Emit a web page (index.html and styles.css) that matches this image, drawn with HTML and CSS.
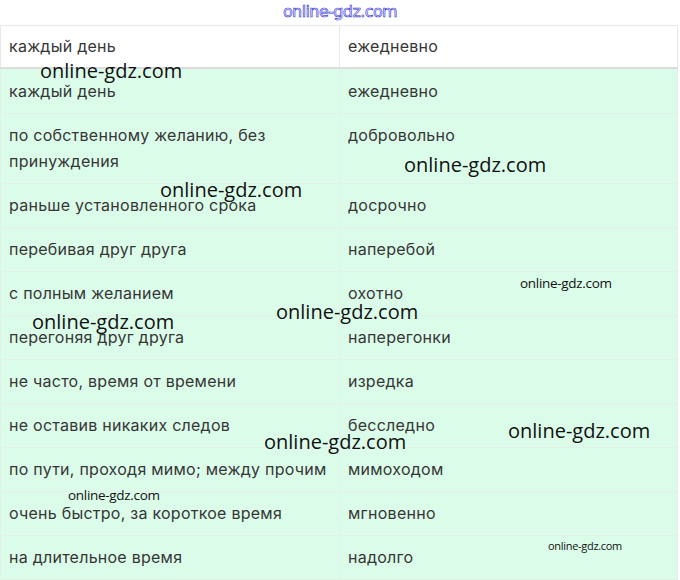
FILE: index.html
```html
<!DOCTYPE html>
<html lang="ru">
<head>
<meta charset="utf-8">
<link rel="stylesheet" href="styles.css">
</head>
<body>
<div class="page">
  <div class="site">online-gdz.com</div>
  <table class="words">
    <thead>
      <tr><th>каждый день</th><th>ежедневно</th></tr>
    </thead>
    <tbody>
      <tr class="first"><td>каждый день</td><td>ежедневно</td></tr>
      <tr><td>по собственному желанию, без принуждения</td><td>добровольно</td></tr>
      <tr><td>раньше установленного срока</td><td>досрочно</td></tr>
      <tr><td>перебивая друг друга</td><td>наперебой</td></tr>
      <tr><td>с полным желанием</td><td>охотно</td></tr>
      <tr><td>перегоняя друг друга</td><td>наперегонки</td></tr>
      <tr><td>не часто, время от времени</td><td>изредка</td></tr>
      <tr><td>не оставив никаких следов</td><td>бесследно</td></tr>
      <tr><td>по пути, проходя мимо; между прочим</td><td>мимоходом</td></tr>
      <tr><td>очень быстро, за короткое время</td><td>мгновенно</td></tr>
      <tr><td>на длительное время</td><td>надолго</td></tr>
    </tbody>
  </table>
  <span class="wm big" style="left:40px;top:61px">online-gdz.com</span>
  <span class="wm big" style="left:404px;top:155px">online-gdz.com</span>
  <span class="wm big" style="left:160px;top:180px">online-gdz.com</span>
  <span class="wm small" style="left:520px;top:277px">online-gdz.com</span>
  <span class="wm big" style="left:276px;top:302px">online-gdz.com</span>
  <span class="wm big" style="left:32px;top:312px">online-gdz.com</span>
  <span class="wm big" style="left:264px;top:432px">online-gdz.com</span>
  <span class="wm big" style="left:508px;top:421px">online-gdz.com</span>
  <span class="wm small" style="left:68px;top:489px">online-gdz.com</span>
  <span class="wm tiny" style="left:548px;top:540px">online-gdz.com</span>
</div>
</body>
</html>
```

FILE: styles.css
```css
html, body {
  margin: 0;
  padding: 0;
  background: #ffffff;
}
.page {
  position: relative;
  width: 680px;
  height: 580px;
  overflow: hidden;
}
.site {
  height: 25px;
  text-align: center;
  font-family: "DejaVu Sans", "Liberation Sans", sans-serif;
  font-size: 16px;
  line-height: 24px;
  color: #f4f4ff;
  -webkit-text-stroke: 0.6px #2f2fd6;
  letter-spacing: -0.6px;
}
.words {
  width: 678px;
  margin-left: 0;
  border-collapse: collapse;
  font-family: Inter, "Noto Sans", sans-serif;
  font-size: 16px;
  letter-spacing: 0.25px;
  color: #363636;
  table-layout: fixed;
}
.words th, .words td {
  text-align: left;
  font-weight: 400;
  padding: 8px 8px 9px 8px;
  line-height: 26px;
  border: 1px solid #e4ece8;
  vertical-align: top;
}
.words th:first-child, .words td:first-child {
  width: 322px;
}
.words th {
  background: #ffffff;
  border-color: #e8e8e8;
  padding: 7px 8px 8px 8px;
  border-bottom: 2px solid #dddddd;
}
.words td {
  background: #dcfcea;
  border-color: #e2f1e8;
}
.words tr.first td {
  padding-top: 9px;
  border-top: 2px solid #eafaf1;
}
.wm {
  position: absolute;
  font-family: "Open Sans", sans-serif;
  color: #111111;
  line-height: 1;
  white-space: nowrap;
}
.wm.big { font-size: 20px; }
.wm.small { font-size: 13.5px; letter-spacing: -0.3px; }
.wm.tiny { font-size: 11px; letter-spacing: -0.3px; }
```
